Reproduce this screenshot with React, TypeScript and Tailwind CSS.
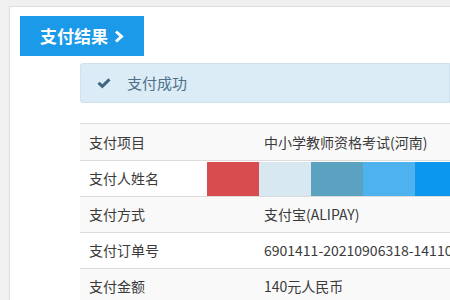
import React from 'react';

const rows = [
  { label: '支付项目', value: '中小学教师资格考试(河南)' },
  { label: '支付人姓名', value: '' },
  { label: '支付方式', value: '支付宝(ALIPAY)' },
  { label: '支付订单号', value: '6901411-20210906318-14110' },
  { label: '支付金额', value: '140元人民币' },
];

const mosaic = ['#d84b4f', '#d8e8f1', '#5aa2bf', '#4eb2ee', '#0c97ee'];

export default function App() {
  return (
    <div
      className="w-[450px] h-[300px] overflow-hidden bg-[#f0f0f0] pt-[6px] pl-[9px]"
      style={{ fontFamily: '"Noto Sans CJK SC", "Liberation Sans", sans-serif' }}
    >
      <div className="h-full bg-white border-t border-l border-[#dedede] pl-[10px] pt-[9px]">
        <div className="w-[124px] h-[40px] bg-[#1a9ae8] flex items-center pl-[20px] gap-[6px] text-white font-bold text-[17px]">
          <span>支付结果</span>
          <svg width="10" height="13" viewBox="0 0 10 13">
            <path d="M2 1.5 L7.5 6.5 L2 11.5" fill="none" stroke="white" strokeWidth="3" strokeLinejoin="miter" />
          </svg>
        </div>

        <div className="ml-[60px] mt-[7px] h-[40px] bg-[#dbecf6] border border-[#cde2ee] rounded-l-[3px] flex items-center pl-[16px]">
          <svg width="14" height="11" viewBox="0 0 14 11">
            <path d="M0.5 5.8 L2.6 3.7 L5.3 6.3 L11.4 0.3 L13.5 2.4 L5.3 10.5 Z" fill="#3f6680" />
          </svg>
          <span className="ml-[16px] text-[15px] text-[#4f7088]">支付成功</span>
        </div>

        <div className="ml-[60px] mt-[20px] text-[14px] text-[#3a3a3a]">
          {rows.map((r, i) => (
            <div
              key={r.label}
              className={`relative flex items-center border-t border-[#dddddd] ${i === 0 ? 'h-[37px]' : 'h-[36px]'} ${i % 2 === 0 ? 'bg-[#f9f9f9]' : 'bg-white'}`}
            >
              <div className="w-[184px] pl-[9px] shrink-0">{r.label}</div>
              <div className="whitespace-nowrap">{r.value}</div>
              {i === 1 && (
                <div className="absolute left-[127px] top-[1px] flex">
                  {mosaic.map((c) => (
                    <div key={c} className="w-[52px] h-[38px]" style={{ backgroundColor: c }} />
                  ))}
                </div>
              )}
            </div>
          ))}
        </div>
      </div>
    </div>
  );
}
